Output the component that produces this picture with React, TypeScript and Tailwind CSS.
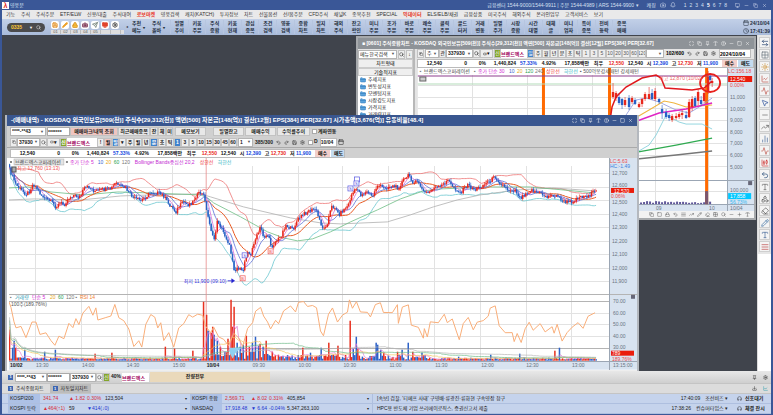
import React, { useState } from 'react';
import {
  ArrowLeftRight, Bell, Calendar, Camera, ChartCandlestick, ChartLine, Clock, Copy, Eraser, FolderClosed, Lock, Maximize,
  Minus, Monitor, MousePointer2, Pencil, Pin, Plus, Save, Search, Settings, Sun, Type, Undo2, X, Redo2, Square, Grid2x2,
  ChartNoAxesColumn, TrendingUp, Shapes, CircleHelp, Download, Headphones, AlignJustify, Volume2, Activity, Send,
} from 'lucide-react';

type Point = [number, number];

const FONT = "font-['Liberation_Sans','Noto_Sans_CJK_KR',sans-serif]";

const MENUS = [
  '기능', '주식', '주식주문', 'ETF/ELW', '신용/대출', '주식대여', '로보마켓', '영웅검색', '캐치(KATCH)', '투자정보', '차트',
  '선물옵션', '선/옵주문', 'CFD주식', '채널K', '종목추천', 'SPECIAL', '빅데이터', 'ELS/ELB/채권', '금융상품', '미국주식',
  '해외주식', '온라인업무', '고객서비스', '보기',
];

const SHORTCUTS = [
  ['일별', '추이'], ['키움', '주문'], ['주식', '종합'], ['키움', '현재'], ['관심', '종목'], ['조건', '검색'], ['영웅', '검색'],
  ['종합', '차트'], ['일지', '차트'], ['해외', '주식'], ['잔고', '확인'], ['미니', '주문'], ['호가', '주문'], ['바로', '주문'],
  ['쾌속', '주문'], ['클릭', '주문'], ['골드', '터커'], ['거래', '변동'], ['일별', '주가'], ['시장', '종합'], ['시간', '대별'],
  ['대체', '글'], ['미니', '업자'], ['특이', '종목'], ['전비', '등락'], ['종목', '매매'],
];

// 분봉 종가 경로
const PRICE: Point[] = [
  [8, 168], [10, 173], [13, 180], [15, 185], [20, 190], [25, 194], [28, 192], [32, 184], [35, 187], [40, 195], [45, 199],
  [50, 202], [55, 207], [60, 203], [63, 205], [67, 199], [72, 195], [77, 197], [80, 196], [83, 189], [88, 187], [93, 191],
  [100, 190], [110, 189], [115, 183], [120, 187], [125, 188], [128, 193], [133, 198], [140, 201], [145, 197], [150, 192],
  [157, 193], [163, 196], [167, 203], [172, 208], [175, 212], [178, 207], [183, 202], [187, 205], [192, 202], [195, 196],
  [200, 193], [204, 197], [206, 212], [209, 223], [213, 242], [217, 220], [220, 227], [224, 235], [228, 243], [232, 260],
  [234, 272], [237, 267], [242, 273], [244, 262], [247, 250], [250, 257], [253, 243], [257, 235], [260, 227], [263, 237],
  [267, 235], [271, 247], [275, 242], [280, 237], [285, 225], [292, 230], [297, 220], [302, 215], [308, 211], [315, 209],
  [319, 220], [323, 230], [327, 222], [331, 207], [335, 207], [338, 215], [343, 210], [348, 205], [351, 195], [357, 188],
  [360, 195], [367, 192], [372, 197], [377, 185], [383, 188], [393, 186], [398, 188], [403, 180], [409, 175], [413, 183],
  [418, 182], [423, 192], [428, 193], [433, 188], [440, 187], [447, 180], [453, 187], [460, 193], [467, 185], [475, 190],
  [483, 185], [495, 177], [500, 183], [508, 190], [515, 190], [520, 198], [527, 192], [532, 190], [537, 192], [547, 197],
  [553, 195], [560, 198], [563, 202], [572, 202], [578, 197], [587, 196], [595, 192],
];

const MA60: Point[] = [
  [8, 188], [27, 187], [50, 192], [83, 195], [117, 192], [150, 193], [200, 195], [207, 198], [213, 203], [240, 217],
  [267, 232], [283, 238], [297, 241], [312, 239], [330, 232], [350, 222], [377, 210], [400, 199], [423, 191], [440, 189],
  [487, 187], [530, 187], [563, 190], [595, 193],
];

const MA120: Point[] = [
  [8, 200], [33, 199], [80, 200], [120, 196], [150, 195], [200, 194], [210, 197], [243, 207], [290, 218], [320, 223],
  [340, 224], [387, 222], [410, 215], [433, 207], [457, 200], [480, 195], [517, 190], [553, 188], [595, 191],
];

const RSI: Point[] = [
  [8, 303], [10, 307], [13, 323], [15, 328], [20, 327], [25, 338], [31, 322], [35, 323], [39, 335], [45, 333], [50, 340],
  [54, 345], [58, 337], [63, 338], [68, 323], [72, 328], [75, 318], [78, 325], [82, 313], [88, 307], [92, 315], [95, 308],
  [97, 320], [105, 318], [110, 317], [114, 305], [118, 318], [123, 322], [128, 330], [133, 347], [138, 340], [141, 347],
  [145, 325], [150, 315], [154, 318], [157, 328], [160, 322], [163, 340], [168, 333], [173, 347], [178, 328], [183, 323],
  [188, 315], [192, 318], [197, 314], [202, 315], [205, 327], [210, 333], [213, 328], [218, 338], [223, 340], [228, 347],
  [233, 333], [238, 338], [242, 347], [247, 328], [252, 323], [255, 312], [260, 308], [263, 317], [267, 323], [270, 330],
  [275, 320], [278, 325], [283, 312], [290, 307], [295, 312], [298, 303], [303, 302], [307, 307], [312, 306], [316, 308],
  [320, 332], [323, 337], [328, 315], [332, 308], [337, 323], [342, 315], [347, 313], [349, 301], [352, 308], [356, 302],
  [360, 313], [367, 313], [370, 318], [375, 305], [380, 303], [383, 313], [392, 313], [397, 304], [398, 323], [402, 308],
  [408, 305], [411, 325], [418, 327], [423, 338], [424, 328], [427, 338], [430, 323], [438, 323], [444, 315], [447, 322],
  [452, 320], [456, 332], [459, 340], [463, 323], [468, 318], [473, 330], [477, 322], [483, 320], [488, 317], [490, 308],
  [495, 307], [499, 327], [505, 333], [512, 333], [514, 342], [517, 333], [521, 343], [525, 328], [529, 323], [533, 330],
  [540, 323], [545, 333], [552, 328], [554, 333], [557, 325], [562, 342], [567, 332], [572, 328], [578, 323], [583, 328],
  [588, 316], [595, 314],
];

const VOLUME_SPIKES: Point[] = [
  [9, 31], [11, 13], [13, 20], [15, 13], [24, 11], [43, 9], [54, 11], [94, 7], [111, 8], [164, 14], [174, 12], [192, 10], [203, 59],
  [206, 46], [208, 30], [210, 28], [212, 34], [214, 26], [216, 20], [219, 14], [227, 22], [230, 61], [232, 34], [233, 54],
  [236, 18], [239, 14], [242, 16], [246, 25], [249, 14], [252, 18], [255, 24], [258, 15], [260, 17], [263, 14], [265, 20],
  [271, 9], [302, 13], [310, 8], [320, 13], [329, 18], [337, 15], [349, 40], [352, 12], [356, 24], [358, 12], [375, 18],
  [377, 16], [380, 11], [383, 8], [397, 9], [402, 11], [408, 18], [412, 9], [421, 8], [459, 4], [491, 6], [519, 7], [554, 10],
  [560, 13],
];

function valueAt(points: Point[], x: number) {
  const i = points.findIndex(p => p[0] >= x);
  if (i <= 0) return i === 0 ? points[0][1] : points[points.length - 1][1];
  const [x0, y0] = points[i - 1];
  const [x1, y1] = points[i];
  return y0 + ((y1 - y0) * (x - x0)) / (x1 - x0);
}

const noise = (i: number) => {
  const v = Math.sin(i * 12.9898) * 43758.5453;
  return v - Math.floor(v);
};

const toPath = (points: Point[]) => points.map((p, i) => `${i ? 'L' : 'M'}${p[0].toFixed(1)} ${p[1].toFixed(1)}`).join('');

const STEP = 1.53;
const xs = Array.from({ length: 385 }, (_, i) => 8.5 + i * STEP);
const closes = xs.map((x, i) => valueAt(PRICE, x) + (noise(i) - 0.5) * 4);

const stats = (n: number) =>
  closes.map((_, i) => {
    const part = closes.slice(Math.max(0, i - n + 1), i + 1);
    const mean = part.reduce((a, b) => a + b, 0) / part.length;
    const dev = Math.sqrt(part.reduce((a, b) => a + (b - mean) ** 2, 0) / part.length);
    return { mean, dev };
  });

const s20 = stats(20);
const ma = (n: number): Point[] => stats(n).map((s, i) => [xs[i], s.mean]);
const bandUp: Point[] = s20.map((s, i) => [xs[i], Math.max(169, s.mean - 1.9 * s.dev - 1)]);
const bandDown: Point[] = s20.map((s, i) => [xs[i], s.mean + 1.9 * s.dev + 1]);

const volumes = xs.map((x, i) => {
  const busy = x > 205 && x < 270 ? 9 : (x > 270 && x < 425) || x < 20 ? 5 : 2;
  const spike = VOLUME_SPIKES.find(s => s[0] >= x - STEP / 2 && s[0] < x + STEP / 2);
  return spike ? spike[1] : 1 + noise(i + 900) * busy;
});

const volAvg = (n: number, k: number): Point[] =>
  volumes.map((_, i) => {
    const part = volumes.slice(Math.max(0, i - n + 1), i + 1);
    return [xs[i], 361 - (part.reduce((a, b) => a + b, 0) / part.length) * k];
  });

const MinuteChart: React.FC = () => (
  <svg viewBox="8 158 629 212" className={`block w-full ${FONT}`} fontSize="5">
    <rect x="8" y="158" width="601" height="204" fill="#fff" />
    <rect x="609" y="158" width="28" height="212" fill="#d8e3f0" />
    <rect x="8" y="362" width="601" height="8" fill="#d8e3f0" />
    <g stroke="#e2e2e2" shapeRendering="crispEdges">
      {[173, 187, 200, 214, 227, 241, 254, 268, 281, 313, 324, 336].map(y => (
        <path key={y} d={`M8 ${y + 0.5}H609`} />
      ))}
      {[34, 80, 126, 171, 251, 297, 342, 388, 434, 480, 526, 571].map(x => (
        <path key={x} d={`M${x + 0.5} 166V361`} />
      ))}
      <path d="M8 294.5H637M8 301.5H609M8 348.5H609" stroke="#b4b4b4" />
      <path d="M609.5 158V370" stroke="#9ba6b4" />
      <path d="M8 361.5H637" stroke="#9ba6b4" />
    </g>
    <path d="M205.5 158V361" stroke="#e98c8c" strokeWidth="0.8" />

    {volumes.map((v, i) => (
      <rect key={i} x={xs[i] - 0.7} y={361 - v} width="1.5" height={v} fill={noise(i + 40) > 0.5 || v > 30 ? '#e8301f' : '#2d62c8'} />
    ))}
    <g fill="none" strokeWidth="0.7">
      <path d={toPath(volAvg(5, 1))} stroke="#e27ad2" />
      <path d={toPath(volAvg(20, 1.1))} stroke="#f3c55e" />
      <path d={toPath(volAvg(60, 1.3))} stroke="#6ab986" />
      <path d={toPath(volAvg(120, 1.4))} stroke="#b5b5b5" />
      <path d={toPath(RSI.map((p, i) => [p[0], p[1] + (noise(i) - 0.5) * 2]))} stroke="#f9ae78" strokeWidth="1" />
    </g>
    <path d="M229 348h12l-6 5-3 6-3-6z" fill="#8fd0f0" />

    <g fill="none" strokeWidth="0.8">
      <path d={toPath(bandUp)} stroke="#ee7474" />
      <path d={toPath(bandDown)} stroke="#69c7cf" />
      <path d={toPath(MA120)} stroke="#b0b0b0" />
      <path d={toPath(MA60)} stroke="#6fbe85" />
      <path d={toPath(ma(20))} stroke="#e8571f" strokeWidth="1" />
      <path d={toPath(ma(10))} stroke="#5a6fd8" />
      <path d={toPath(ma(5))} stroke="#d86fd8" />
    </g>
    {closes.map((c, i) => {
      const open = i ? closes[i - 1] : c - 3;
      const color = c > open ? '#2861c6' : '#e8281c';
      const top = Math.min(open, c);
      const h = Math.max(1, Math.abs(open - c));
      return (
        <g key={i} fill={color}>
          <rect x={xs[i] - 0.3} y={top - noise(i + 7) * 3} width="0.6" height={h + 5 * noise(i + 7)} />
          <rect x={xs[i] - 0.75} y={top} width="1.5" height={h} />
        </g>
      );
    })}

    <rect x="11" y="167" width="4" height="5" fill="#aaa" stroke="#555" />
    <text x="16" y="170" fill="#f05050">최고 12,760 (13:13)</text>
    <text x="183" y="283" fill="#3434dd">최저 11,900 (09:10)</text>
    <path d="M227 281h4v-2l3 2-3 2v-2h-4z" fill="#2222d0" stroke="#2222d0" strokeWidth="0.5" />
    <g textAnchor="middle" fontSize="4" strokeWidth="0.7">
      <rect x="354" y="177" width="5" height="5" fill="#fff" stroke="#5656e0" />
      {[[244, 256], [350, 189], [356, 184]].map(([x, y]) => (
        <g key={`${x}-${y}`}>
          <rect x={x - 2.5} y={y - 3} width="5" height="5" fill="#fff" stroke="#5656e0" />
          <text x={x} y={y + 1} fill="#4242dd">S</text>
        </g>
      ))}
      {[[242, 279], [270, 252]].map(([x, y]) => (
        <g key={`${x}-${y}`}>
          <rect x={x - 2.5} y={y - 3} width="5" height="5" fill="#fff" stroke="#ee5555" />
          <text x={x} y={y + 1} fill="#e33">B</text>
        </g>
      ))}
    </g>

    <g>
      <rect x="13" y="159" width="50" height="6" fill="#e4e4e4" stroke="#aaa" strokeWidth="0.5" />
      <rect x="9" y="161" width="2" height="2" fill="#888" />
      <text x="14" y="164" fill="#444">브랜드엑스코퍼레이션</text>
      <rect x="65" y="161" width="2" height="2" fill="#888" />
      <text y="164">
        <tspan x="69" fill="#d22ad2">종가 단순 5</tspan>
        <tspan x="97" fill="#3b5fd0">10</tspan>
        <tspan x="105" fill="#e8a820">20</tspan>
        <tspan x="113" fill="#2aa352">60</tspan>
        <tspan x="121" fill="#777">120</tspan>
        <tspan x="134" fill="#c42ad2">Bollinger Bands중심선 20,2</tspan>
        <tspan x="199" fill="#ee3a3a">상한선</tspan>
        <tspan x="217" fill="#32b6c4">하한선</tspan>
      </text>
      <text y="299">
        <tspan x="9" fill="#777">▪</tspan>
        <tspan x="14" fill="#2a9bb4">거래량</tspan>
        <tspan x="31" fill="#d22ad2">단순 5</tspan>
        <tspan x="49" fill="#e8a820">20</tspan>
        <tspan x="57" fill="#2aa352">60</tspan>
        <tspan x="65" fill="#777">120 ▪</tspan>
        <tspan x="79" fill="#f08030">RSI 14</tspan>
      </text>
      <text x="10" y="306" fill="#555">100주(189.76%)</text>
    </g>

    <g fill="#6a7480">
      {['12,700', '12,600', '12,500', '12,400', '12,300', '12,200', '12,100', '12,000', '11,900'].map((t, i) => (
        <text key={t} x="612" y={[175, 187, 204][i] ?? 175 + Math.round(i * 13.5)}>{t}</text>
      ))}
      {['70.00', '60.00', '50.00', '40.00', '30.00'].map((t, i) => (
        <text key={t} x="613" y={303 + Math.round(i * 11.6)}>{t}</text>
      ))}
      {['13:30', '14:00', '14:30', '15:00'].map((t, i) => (
        <text key={t} x={35 + Math.round(i * 45.7)} y="367">{t}</text>
      ))}
      {['09:30', '10:00', '10:30', '11:00', '11:30', '12:00', '12:30', '13:00'].map((t, i) => (
        <text key={t} x={252 + Math.round(i * 45.7)} y="367">{t}</text>
      ))}
      <text x="613" y="367">13:15:00</text>
    </g>
    <g fontWeight="bold" fill="#222">
      <text x="9" y="367">10/02</text>
      <text x="206" y="367">10/04</text>
    </g>
    <text x="610" y="163" fill="#ee4848">LC:5.63</text>
    <text x="610" y="168" fill="#3b7fe0">HC:-1.49</text>
    <rect x="611" y="188" width="23" height="5" fill="#ea1c0c" />
    <text x="614" y="193" fill="#fff">12,570</text>
    <text x="611" y="198" fill="#ee4848">0.06%</text>
    <rect x="611" y="351" width="23" height="5" fill="#ea1c0c" />
    <text x="612" y="355" fill="#fff">789</text>
    <text x="612" y="361" fill="#ee4848">189.76%</text>
    <rect x="631" y="295" width="4" height="4" fill="#667" />
  </svg>
);

// [x, 고가, 저가, 몸통 위, 몸통 아래, 상승 여부]
const DAILY: [number, number, number, number, number, number][] = [
  [614, 82, 98, 91, 96, 1], [617, 90, 100, 92, 97, 1], [620, 92, 104, 96, 102, 0], [623, 97, 108, 98, 104, 0], [626, 96, 106, 99, 104, 1],
  [630, 94, 109, 97, 106, 0], [633, 95, 103, 97, 101, 1], [636, 97, 104, 99, 103, 0], [640, 101, 107, 103, 106, 1], [643, 97, 106, 98, 103, 1],
  [646, 91, 100, 93, 98, 1], [650, 86, 98, 93, 98, 1], [653, 88, 99, 92, 98, 0], [656, 87, 100, 90, 98, 1], [660, 97, 103, 98, 101, 0],
  [663, 104, 118, 108, 112, 0], [667, 108, 118, 111, 116, 0], [670, 112, 120, 114, 117, 0], [673, 113, 121, 115, 119, 1], [677, 112, 119, 115, 117, 1],
  [680, 111, 118, 113, 116, 1], [683, 109, 118, 112, 114, 1], [687, 110, 118, 114, 117, 0], [690, 98, 117, 101, 116, 1], [693, 95, 110, 98, 106, 1],
  [696, 95, 106, 97, 105, 0], [699, 88, 104, 91, 100, 1], [702, 95, 105, 99, 103, 0], [705, 88, 102, 92, 100, 1], [709, 70, 93, 76, 90, 1],
  [711, 72, 82, 75, 79, 0], [713, 77, 86, 80, 82, 1],
];

const DailyChart: React.FC = () => (
  <svg viewBox="419 67 335 143" className={`block w-full ${FONT}`} fontSize="5">
    <rect x="419" y="67" width="309" height="136" fill="#fff" />
    <rect x="728" y="67" width="27" height="143" fill="#d8e3f0" />
    <rect x="419" y="203" width="309" height="7" fill="#d8e3f0" />
    <g stroke="#e2e2e2" shapeRendering="crispEdges">
      {[84, 96, 107, 119, 130, 142, 154, 165, 190].map(y => (
        <path key={y} d={`M419 ${y + 0.5}H728`} />
      ))}
      {[473, 528, 593, 656, 709].map(x => (
        <path key={x} d={`M${x + 0.5} 74V203`} />
      ))}
      <path d="M419 179.5H755M419 203.5H755M728.5 67V210" stroke="#9ba6b4" />
    </g>
    <g fill="#ff6a00">
      <rect x="543" y="67" width="3" height="60" />
      <rect x="609" y="67" width="3" height="60" />
      <rect x="706" y="67" width="3" height="136" />
    </g>
    <path d="M419 75H728" stroke="#8d3f8d" />
    <path d="M419 83H728" stroke="#b4dcb9" />
    <g fill="none">
      <path d="M638 151L650 144L657 134L667 114L680 121L687 123H703L713 128" stroke="#7accd8" strokeWidth="0.8" />
      <path d="M627 114L637 99L647 97L660 101L677 109L690 112L700 106L713 97" stroke="#8d96dd" strokeWidth="0.8" />
      <path d="M638 116L650 109L665 100L675 102L687 106L713 104" stroke="#f0b440" />
      <path d="M638 120L660 112L687 108L713 102" stroke="#e025c4" strokeWidth="1.5" />
      <path d="M638 151L677 144L713 137" stroke="#2faa50" strokeWidth="1.2" />
      <path d="M638 158L677 154L713 150" stroke="#777" strokeWidth="1.5" />
    </g>
    {DAILY.map(([x, hi, lo, top, bottom, up]) => (
      <g key={x} fill={up ? '#e8281c' : '#2861c6'}>
        <rect x={x - 0.3} y={hi} width="0.6" height={lo - hi} />
        <rect x={x - 1.2} y={top} width="2.4" height={bottom - top} />
      </g>
    ))}
    <path d="M611 119L613 106L617 96L627 86L643 77L657 74L662 77L666 87L680 88L693 89L705 87L713 80" fill="none" stroke="#e0181c" strokeWidth="1.5" />
    <ellipse cx="711" cy="82" rx="10" ry="9" fill="none" stroke="#e8201c" strokeWidth="1.8" />
    {Array.from({ length: 32 }, (_, i) => (
      <rect key={i} x={617 + i * 3} y={203 - 1 - noise(i) * 2} width="2" height={1 + noise(i) * 2} fill="#60589a" />
    ))}
    <rect x="706" y="190" width="3" height="13" fill="#7a5670" />
    <text y="72">
      <tspan x="421" fill="#777">▪</tspan>
      <tspan x="425" fill="#444">브랜드엑스코퍼레이션</tspan>
      <tspan x="475" fill="#777">▪</tspan>
      <tspan x="479" fill="#d22ad2">종가 단순 30</tspan>
      <tspan x="510" fill="#3b5fd0">10</tspan>
      <tspan x="518" fill="#e8a820">20</tspan>
      <tspan x="526" fill="#2aa352">120</tspan>
      <tspan x="536" fill="#777">240</tspan>
      <tspan x="547" fill="#ee3a3a">상한선</tspan>
      <tspan x="565" fill="#32b6c4">하한선</tspan>
      <tspan x="581" fill="#555">▪ 500억봉강세패턴 강세패턴</tspan>
    </text>
    <rect x="421" y="76" width="6" height="4" fill="#ccc" stroke="#666" />
    <text x="660" y="79" fill="#f06464">최고 12,870 (10/02)</text>
    <g fill="#6a7480">
      {['11,000', '10,000', '9,000', '8,000', '7,000', '6,000', '5,000'].map((t, i) => (
        <text key={t} x="731" y={98 + Math.round(i * 11.6)}>{t}</text>
      ))}
      <text x="731" y="191">100,000</text>
      <text x="657" y="209">09</text>
      <text x="710" y="209">10</text>
      <text x="731" y="209">10/04</text>
    </g>
    <text x="729" y="72" fill="#ee4848">LC:156.18</text>
    <rect x="729" y="75" width="24" height="6" fill="#ea1c0c" />
    <text x="731" y="80" fill="#fff">12,540</text>
    <text x="731" y="86" fill="#ee4848">0.00%</text>
    <rect x="729" y="192" width="23" height="6" fill="#00c8ff" />
    <text x="731" y="197" fill="#fff">17,858</text>
    <text x="731" y="203" fill="#30b8f0">56.73%</text>
    <rect x="749" y="180" width="4" height="4" fill="#667" />
  </svg>
);

interface SelectBoxProps {
  label: string;
  value: string;
  className: string;
}

const SelectBox: React.FC<SelectBoxProps> = ({ label, value, className }) => (
  <div className={`relative flex h-[9px] shrink-0 items-center border border-[#b4b4b4] bg-white ${className}`}>
    <select aria-label={label} className="h-full w-full appearance-none pl-px leading-[7px] text-[#222] outline-none">
      <option>{value}</option>
    </select>
    <span className="pointer-events-none absolute right-px text-[4px] text-[#555]">▼</span>
  </div>
);

const SmallButton: React.FC<{ className?: string; children: React.ReactNode }> = ({ className = 'bg-[#eee] w-[7px]', children }) => (
  <button className={`flex h-[9px] shrink-0 cursor-pointer items-center justify-center overflow-hidden border border-[#c2c2c2] leading-[7px] whitespace-nowrap ${className}`}>
    {children}
  </button>
);

const TITLE_ICONS = [Maximize, Copy, Pin, Type, CircleHelp, Minus, Square, X];

const WindowTitle: React.FC<{ text: string; className: string }> = ({ text, className }) => (
  <div className={`flex shrink-0 items-center gap-1 overflow-hidden px-1 ${className}`}>
    <h2 className="flex-1 leading-[9px] font-bold whitespace-nowrap">{text}</h2>
    <div className="flex gap-[3px]">
      {TITLE_ICONS.map((Icon, i) => (
        <button key={i} aria-label={`창 ${i + 1}`} className="cursor-pointer">
          <Icon className="size-[5px]" strokeWidth={2} />
        </button>
      ))}
    </div>
  </div>
);

const QuoteRow: React.FC = () => (
  <div className="flex h-[9px] items-center overflow-hidden border border-[#bbb] bg-white text-[5px] leading-[7px] font-bold whitespace-nowrap text-[#111]">
    <span className="w-[24px] shrink-0 text-right">12,540</span>
    <span className="w-[25px] shrink-0 text-right">0</span>
    <span className="w-[19px] shrink-0 text-right">0%</span>
    <span className="w-[30px] shrink-0 text-right">1,440,824</span>
    <span className="w-[21px] shrink-0 text-right text-[#1446dd]">57.33%</span>
    <span className="w-[19px] shrink-0 text-right">4.92%</span>
    <span className="w-[33px] shrink-0 text-right">17,858백만</span>
    <span className="w-[14px] shrink-0 text-right">최우</span>
    <span className="w-[21px] shrink-0 text-right text-[#e8281c]">12,550</span>
    <span className="w-[19px] shrink-0 text-right">12,540</span>
    <span className="w-[25px] shrink-0 text-right">시 <b className="text-[#1446dd]">12,390</b></span>
    <span className="w-[25px] shrink-0 text-right">고 <b className="text-[#e8281c]">12,730</b></span>
    <span className="w-[25px] shrink-0 text-right">저 <b className="text-[#1446dd]">11,900</b></span>
    <button className="ml-1 w-[15px] shrink-0 cursor-pointer bg-[#f3cfcb]">매수</button>
    <button className="ml-px w-[15px] shrink-0 cursor-pointer bg-[#c4dbf0]">매도</button>
  </div>
);

const ToolIcons: React.FC = () => (
  <div className="flex shrink-0 items-center gap-[3px] px-px text-[#555]">
    {[Undo2, Redo2, Save, Settings].map((Icon, i) => (
      <button key={i} aria-label={`차트 도구 ${i + 1}`} className="cursor-pointer">
        <Icon className="size-[5px]" strokeWidth={3} />
      </button>
    ))}
  </div>
);

const DailyWindow: React.FC = () => (
  <section className="absolute top-px right-[1px] flex h-[184px] w-[400px] flex-col border-2 border-[#a6a9ac] bg-[#e4e4e4]">
    <WindowTitle
      className="h-[11px] bg-[#8e9398] text-[5px] text-white"
      text="■ [0601] 주식종합차트 - KOSDAQ 외국인보유[509(천)] 주식수[29,312(천)] 액면[500] 자본금[148(억)] 결산[12월] EPS[384] PER[32.67]"
    />
    <div className="flex min-h-0 flex-1">
      <aside className="flex w-[57px] shrink-0 flex-col border-r-2 border-[#b8b8b8] bg-white text-[5px]">
        <div className="flex h-[10px] items-center gap-px bg-[#e4e4e4]">
          <SelectBox label="지표 검색" value="메뉴한국검색" className="w-[39px]" />
          <SmallButton><Search className="size-[5px]" /></SmallButton>
          <SmallButton>↓</SmallButton>
        </div>
        <h3 className="border border-[#ccc] bg-[#efefef] text-center leading-[7px]">차트형태</h3>
        <h3 className="border border-[#ccc] bg-[#efefef] text-center leading-[6px]">기술적지표</h3>
        <ul className="pl-[2px]">
          {['추세지표', '변동성지표', '모멘텀지표', '시장강도지표', '가격지표', '거래량지표'].map(name => (
            <li key={name} className="flex h-[7px] items-center gap-[2px] leading-[7px] text-[#222]">
              <FolderClosed className="size-[6px] fill-[#5ba3dc] text-[#2a77b8]" />
              {name}
            </li>
          ))}
        </ul>
      </aside>
      <div className="flex min-w-0 flex-1 flex-col pl-[2px]">
        <div className="flex h-[10px] items-center overflow-hidden text-[5px]">
          <SmallButton><Copy className="size-[4px]" /></SmallButton>
          <SelectBox label="시장" value="주" className="ml-px w-[14px]" />
          <SmallButton>관</SmallButton>
          <SelectBox label="종목코드" value="337930" className="w-[27px] font-bold" />
          <SmallButton><Search className="size-[5px]" /></SmallButton>
          <SmallButton className="w-[13px] bg-[#eee]"><Volume2 className="size-[4px]" /> ▾</SmallButton>
          <SmallButton className="ml-px w-[7px] bg-[#84a52b] text-white">신</SmallButton>
          <input aria-label="종목명" defaultValue="브랜드엑스" className="h-[9px] w-[26px] shrink-0 bg-white font-bold text-[#a00058]" />
          <SmallButton className="w-[7px] bg-[#3f82cc] text-white">일</SmallButton>
          {['주', '월', '년', '분', '초', '틱'].map(t => <SmallButton key={t} className="w-[8px] bg-[#eee]">{t}</SmallButton>)}
          {['1', '3', '5', '10', '20', '30', '60', '120'].map(t => <SmallButton key={t} className="w-[8px] bg-[#eee] text-[#555]">{t}</SmallButton>)}
          <SelectBox label="주기" value="" className="w-[18px]" />
          <span className="mx-[2px] shrink-0 leading-[9px] font-bold">102/600</span>
          <ToolIcons />
          <input aria-label="조회일" defaultValue="2024/10/04" className="ml-[2px] h-[9px] w-[32px] shrink-0 border border-[#bbb] bg-white font-bold" />
        </div>
        <QuoteRow />
        <DailyChart />
        <div className="flex h-[7px] items-center justify-end gap-[3px] overflow-hidden bg-[#f2f2f2] pr-1 text-[#555]">
          {[Copy, Square, Lock, Undo2, AlignJustify, TrendingUp, Pencil, Eraser, Grid2x2, Search, Minus, Plus, Type].map((Icon, i) => (
            <Icon key={i} className="size-[5px] shrink-0" />
          ))}
        </div>
      </div>
    </div>
  </section>
);

const MinuteWindow: React.FC = () => {
  const [linked, setLinked] = useState(false);
  return (
    <section className="absolute top-[80px] left-[3px] flex w-[634px] flex-col border-r-2 border-l-2 border-[#b4b8be] bg-[#d0d0d0]">
      <WindowTitle
        className="h-[11px] bg-[#39568f] text-[6px] text-white"
        text="-(매매내역) - KOSDAQ 외국인보유[509(천)] 주식수[29,312(천)] 액면[500] 자본금[148(억)] 결산[12월] EPS[384] PER[32.67] 시가총액[3,676(억)] 유동비율[48.4]"
      />
      <div className="flex h-[11px] items-center pl-[3px] text-[5px] font-bold text-[#222]">
        <SelectBox label="계좌번호" value="****-**43" className="w-[36px]" />
        <input aria-label="비밀번호" defaultValue="*******" className="ml-px h-[9px] w-[23px] border border-[#aaa] bg-white" />
        <SmallButton className="w-[48px] bg-[#efc5c0]">매매마크/내역 조회</SmallButton>
        <SmallButton className="w-[32px] bg-[#e4e4e4]">최근매매종목</SmallButton>
        <SmallButton className="w-[8px] bg-[#e4e4e4]">잔</SmallButton>
        <SmallButton className="w-[8px] bg-[#e4e4e4]">체</SmallButton>
        <SmallButton className="w-[7px] bg-[#e4e4e4]">미</SmallButton>
        <SmallButton className="ml-[2px] w-[31px] bg-[#e8e8e8]">메모보기</SmallButton>
        <SmallButton className="ml-[7px] w-[31px] bg-[#e8e8e8]">일별잔고</SmallButton>
        <SmallButton className="ml-px w-[31px] bg-[#e8e8e8]">매매수익</SmallButton>
        <SmallButton className="ml-px w-[33px] bg-[#e8e8e8]">수익률추이</SmallButton>
        <label className="ml-[2px] flex items-center gap-px">
          <input type="checkbox" checked={linked} onChange={e => setLinked(e.target.checked)} className="size-[5px] appearance-none border border-[#aaa] bg-white checked:bg-blue-600" />
          계좌연동
        </label>
      </div>
      <div className="flex h-[11px] items-center border-b border-[#aaa] pl-[3px] text-[5px] font-bold text-[#222]">
        <SmallButton><Copy className="size-[4px]" /></SmallButton>
        <SelectBox label="종목코드" value="37930" className="w-[23px]" />
        <SmallButton><Search className="size-[5px]" /></SmallButton>
        <SmallButton className="w-[13px] bg-[#eee]"><Volume2 className="size-[4px]" /> ▾</SmallButton>
        <SmallButton className="w-[7px] bg-[#84a52b] text-white">신</SmallButton>
        <input aria-label="종목명" defaultValue="브랜드엑스" className="h-[9px] w-[30px] bg-white text-[#a00058]" />
        <SmallButton>!</SmallButton>
        <SmallButton className="w-[8px] bg-[#efc5c0]">월</SmallButton>
        <SmallButton className="w-[7px] bg-[#3f82cc] text-white">일</SmallButton>
        <SmallButton>▾</SmallButton>
        {['주', '월', '년'].map(t => <SmallButton key={t} className="w-[8px] bg-[#eee]">{t}</SmallButton>)}
        <SmallButton className="w-[8px] bg-[#3f82cc] text-white">분</SmallButton>
        {['초', '틱'].map(t => <SmallButton key={t} className="w-[8px] bg-[#eee]">{t}</SmallButton>)}
        <SmallButton className="w-[7px] bg-[#3f82cc] text-white">1</SmallButton>
        {['3', '5', '10', '15', '30', '45', '60'].map(t => <SmallButton key={t} className="w-[8px] bg-[#eee]">{t}</SmallButton>)}
        <SelectBox label="분 주기" value="1" className="ml-px w-[15px]" />
        <span className="mx-[2px] leading-[9px]">385/300</span>
        <ToolIcons />
        <label className="ml-[2px] flex items-center gap-px">
          <input type="checkbox" className="size-[5px] appearance-none border border-[#aaa] bg-white checked:bg-blue-600" />
          D
        </label>
        <input aria-label="기준일" defaultValue="10/04" className="ml-[2px] h-[9px] w-[17px] border border-[#bbb] bg-white" />
        <Calendar className="ml-px size-[6px]" />
      </div>
      <div className="flex h-[10px] items-center">
        <div className="ml-[3px] w-[335px]"><QuoteRow /></div>
      </div>
      <div className="bg-white pl-[2px]">
        <MinuteChart />
      </div>
      <div className="h-[3px] bg-[#eee]" />
    </section>
  );
};

const SIDE_TOOLS = [
  ArrowLeftRight, Grid2x2, Sun, ChartLine, Activity, MousePointer2, Minus, TrendingUp, ChartNoAxesColumn, Activity,
  ChartCandlestick, Undo2, Type, Shapes, Eraser, Pencil, Type, AlignJustify,
];

const SIDE_COLORS = [
  'text-[#26436f]', 'text-[#68727d]', 'text-[#c98a26]', 'text-[#bd5148]', 'text-[#bd5148]', 'text-[#244a95]', 'text-[#666666]',
  'text-[#555555]', 'text-[#446699]', 'text-[#bd5148]', 'text-[#d03a38]', 'text-[#244a75]', 'text-[#666666]', 'text-[#555555]',
  'text-[#555555]', 'text-[#356ba0]', 'text-[#446699]', 'text-[#bb4444]',
];

const QUICK_ICONS = [
  { Icon: Save, color: 'fill-[#f6cf9a] text-[#e0912c]' },
  { Icon: Pencil, color: 'fill-[#eca22c] text-[#eca22c]' },
  { Icon: Lock, color: 'fill-[#f4bd3c] text-[#d98f20]' },
  { Icon: Camera, color: 'fill-[#b48a9c] text-[#7a2f4d]' },
  { Icon: Send, color: 'text-[#6b7b70]' },
  { Icon: Monitor, color: 'fill-[#e0442c] text-[#e0442c]' },
  { Icon: Settings, color: 'text-[#333333]' },
];

const Header: React.FC = () => (
  <header className="shrink-0">
    <div className="flex h-[10px] items-center bg-[#3a5797] pr-[4px] text-[5px] leading-[8px] text-[#d7e0f2]">
      <span className="flex size-[7px] items-center justify-center bg-white text-[7px] leading-none font-bold text-[#d22]">λ</span>
      <h1 className="ml-px flex-1">영웅문</h1>
      <span className="mr-[8px]">금융센터 1544-9000/1544-9911 | 주문 1544-4989 | ARS 1544-9900 ▾</span>
      <span>캐칭</span>
      <Camera className="mx-1 size-[6px]" />
      <Bell className="mr-[8px] size-[6px]" />
      <nav className="mr-[8px] flex gap-[3px]">
        {['1', '2', '3', '4', '5', '6', '7', '8'].map(n => (
          <button key={n} className={`cursor-pointer ${n === '5' ? 'font-bold text-white' : ''}`}>{n}</button>
        ))}
      </nav>
      <div className="flex gap-[4px]">
        {[Monitor, Minus, Copy, X].map((Icon, i) => (
          <button key={i} aria-label={`프로그램 창 ${i + 1}`} className="cursor-pointer"><Icon className="size-[5px]" /></button>
        ))}
      </div>
    </div>
    <nav className="flex h-[9px] items-center bg-[#e9e9ea] pl-1 text-[5px] leading-[9px] whitespace-nowrap text-[#333]">
      <div className="flex w-[597px] justify-between">
        {MENUS.map(m => (
          <button key={m} className={`cursor-pointer ${m === '로보마켓' || m === '빅데이터' ? 'font-bold text-[#e83828]' : ''}`}>{m}</button>
        ))}
      </div>
    </nav>
    <div className="flex h-[16px] items-center overflow-hidden bg-linear-to-b from-[#c2d0e8] to-[#a9bbda] pl-[5px]">
      <div className="flex h-[9px] w-[38px] items-center rounded-full bg-[#4b4b4d] px-1 text-[5px] leading-[9px] text-white">
        <input aria-label="화면번호" defaultValue="0335" className="w-[14px] font-bold text-[#ffc936] outline-none" />
        <span className="ml-1 flex-1 text-[4px]">▼</span>
        <Search className="size-[5px]" />
      </div>
      <div className="ml-[6px] w-[73px]">
        <div className="flex gap-[2px]">
          {QUICK_ICONS.map(({ Icon, color }, i) => (
            <button key={i} aria-label={`빠른 도구 ${i + 1}`} className="flex size-[8px] cursor-pointer items-center justify-center rounded-xs bg-white">
              <Icon className={`size-[6px] ${color}`} strokeWidth={3} />
            </button>
          ))}
        </div>
        <div className="mt-px flex h-[4px] bg-[#dedede] text-[4px] leading-[4px] text-[#555]">
          {['01', '02', '03', '04', '05', '', ''].map((n, i) => (
            <button key={i} aria-label={`탭 ${i + 1}`} className="w-[10px] cursor-pointer border-r border-[#bbb]">{n}</button>
          ))}
        </div>
      </div>
      <span className="w-[6px] text-center text-[4px] text-[#334]">◂</span>
      {[['추천', '메뉴'], ['주식', '올바']].map(([a, b]) => (
        <button key={b} className="flex w-[20px] shrink-0 cursor-pointer items-center gap-[2px] pl-[2px] text-[5px] leading-[7px] font-bold text-[#26303f]">
          <span>{a}<br />{b}</span>
          <span className="text-[4px]">▾</span>
        </button>
      ))}
      <div className="grid w-[460px] shrink-0 auto-cols-fr grid-flow-col">
        {SHORTCUTS.map(([a, b], i) => (
          <button key={i} className="cursor-pointer border-l border-[#b6c5df] text-[5px] leading-[7px] font-bold text-[#26303f]">
            {a}<br />{b}
          </button>
        ))}
      </div>
      <div className="ml-auto pr-px text-[5px] leading-[8px] font-bold text-[#26303f]">
        <div className="flex items-center gap-px"><Calendar className="size-[6px]" />24/10/04</div>
        <div className="flex items-center gap-px"><Clock className="size-[6px]" />17:41:39</div>
      </div>
    </div>
  </header>
);

const Badge: React.FC = () => (
  <span className="flex size-[5px] shrink-0 items-center justify-center bg-[#3d66b0] text-[4px] leading-none font-bold text-white">1</span>
);

interface Quote {
  name: string;
  value: string;
  diff: string;
  rate: string;
  volume: string;
  color: string;
}

const TICKERS: Quote[][] = [
  [
    { name: 'KOSPI200', value: '341.74', diff: '▲ 1.82', rate: '0.30%', volume: '123,504', color: 'text-[#d83038]' },
    { name: 'KOSPI 종합', value: '2,569.71', diff: '▲ 8.02', rate: '0.31%', volume: '405,854', color: 'text-[#d83038]' },
  ],
  [
    { name: 'KOSPI 등락', value: '▲464(↑1)', diff: '59', rate: '▼414(↓0)', volume: '', color: 'text-[#d83038]' },
    { name: 'NASDAQ', value: '17,918.48', diff: '▼ 6.64', rate: '-0.04%', volume: '5,347,263,100', color: 'text-[#1d35d0]' },
  ],
];

const NEWS = [
  { title: "[속보] 검찰, '티메프 사태' 구영배·류광진·류화현 구속영장 청구", time: '17:40:09', source: '조선비즈', action: '신호대기' },
  { title: 'HPC용 반도체 기업 쓰리에이로직스, 증권신고서 제출', time: '17:38:26', source: '컨슈머타임스', action: '체결 잔시' },
];

const Footer: React.FC = () => (
  <footer className="shrink-0 text-[5px] whitespace-nowrap text-[#222]">
    <div className="flex h-[12px] items-center bg-linear-to-b from-[#e8e8e8] to-[#cfcfcf] pl-[6px]">
      <Badge />
      <SelectBox label="주문 계좌" value="****-**43" className="ml-[2px] w-[32px] font-bold" />
      <input aria-label="주문 비밀번호" defaultValue="*******" className="h-[9px] w-[23px] border border-[#aaa] bg-white font-bold" />
      <SelectBox label="주문 종목" value="337930" className="w-[26px] font-bold" />
      <SmallButton><Search className="size-[5px]" /></SmallButton>
      <SmallButton className="w-[7px] bg-[#84a52b] text-white">신</SmallButton>
      <span className="mx-px font-bold">40%</span>
      <input aria-label="주문 종목명" defaultValue="브랜드엑스" className="h-[9px] w-[27px] bg-white font-bold text-[#a00058]" />
      <button className="ml-px h-[10px] w-[120px] cursor-pointer bg-[#ead9bb] pr-[30px] font-bold">잔량전부</button>
      <div className="ml-auto flex gap-[6px] pr-[3px]">
        <Pin className="size-[5px]" />
        <Settings className="size-[5px]" />
      </div>
    </div>
    <div className="flex h-[11px] items-center border-y border-[#c4c4c4] bg-[#dcdcdc] pl-[6px]">
      <button className="flex h-full cursor-pointer items-center gap-[3px] pr-[6px]"><Badge />주식종합차트</button>
      <button className="flex h-full cursor-pointer items-center gap-[3px] bg-[#bcbcbc] px-[3px]"><Badge />자동일지차트</button>
      <div className="ml-auto flex gap-[6px] pr-[3px]">
        <Download className="size-[5px]" />
        <ChartLine className="size-[5px] text-[#1896a8]" />
      </div>
    </div>
    {TICKERS.map((row, i) => (
      <div key={i} className="flex h-[10px] items-center border-b border-[#aebfdf] bg-[#c5d3ec] pl-[6px] leading-[9px]">
        {row.map(q => (
          <div key={q.name} className="flex h-full w-[182px] shrink-0 items-center">
            <span className="h-full w-[32px] bg-[#adc1e6] pl-[2px]">{q.name}</span>
            <span className={`w-[27px] pl-[3px] ${q.color}`}>{q.value}</span>
            <span className={`w-[20px] pl-[2px] ${q.diff === '59' ? '' : q.color}`}>{q.diff}</span>
            <span className={`w-[18px] ${q.rate.startsWith('▼') ? 'text-[#1d35d0]' : q.color}`}>{q.rate}</span>
            <span className="flex-1">{q.volume}</span>
            <span className="pr-[3px] text-[4px]">▾</span>
          </div>
        ))}
        <span className="flex-1 border-l border-[#aebfdf] pl-[4px]">{NEWS[i].title}</span>
        <span className="pr-[5px]">{NEWS[i].time}</span>
        <span className="pr-[5px]">{NEWS[i].source} ▾</span>
        <button className="flex w-[38px] cursor-pointer items-center gap-[3px] pl-1 font-bold">
          <Headphones className="size-[5px]" />
          {NEWS[i].action}
        </button>
      </div>
    ))}
  </footer>
);

export default function App() {
  return (
    <div className={`flex h-screen flex-col overflow-hidden border-x-2 border-b border-[#3a5797] bg-[#dcdcdc] ${FONT}`}>
      <Header />
      <div className="flex min-h-0 flex-1">
        <main className="relative min-w-0 flex-1 overflow-hidden bg-[#40444c]">
          <DailyWindow />
          <MinuteWindow />
        </main>
        <aside className="flex w-[14px] shrink-0 flex-col items-center border-l border-[#ddd] bg-white">
          <div className="flex w-full flex-col items-center gap-px bg-[#e6e6e6] py-[2px]">
            {SIDE_TOOLS.map((Icon, i) => (
              <button key={i} aria-label={`그리기 도구 ${i + 1}`} className="flex size-[11px] cursor-pointer items-center justify-center border border-[#cfcfcf] bg-[#f4f4f4]">
                <Icon className={`size-[8px] ${SIDE_COLORS[i]}`} strokeWidth={2} />
              </button>
            ))}
          </div>
        </aside>
      </div>
      <Footer />
    </div>
  );
}
